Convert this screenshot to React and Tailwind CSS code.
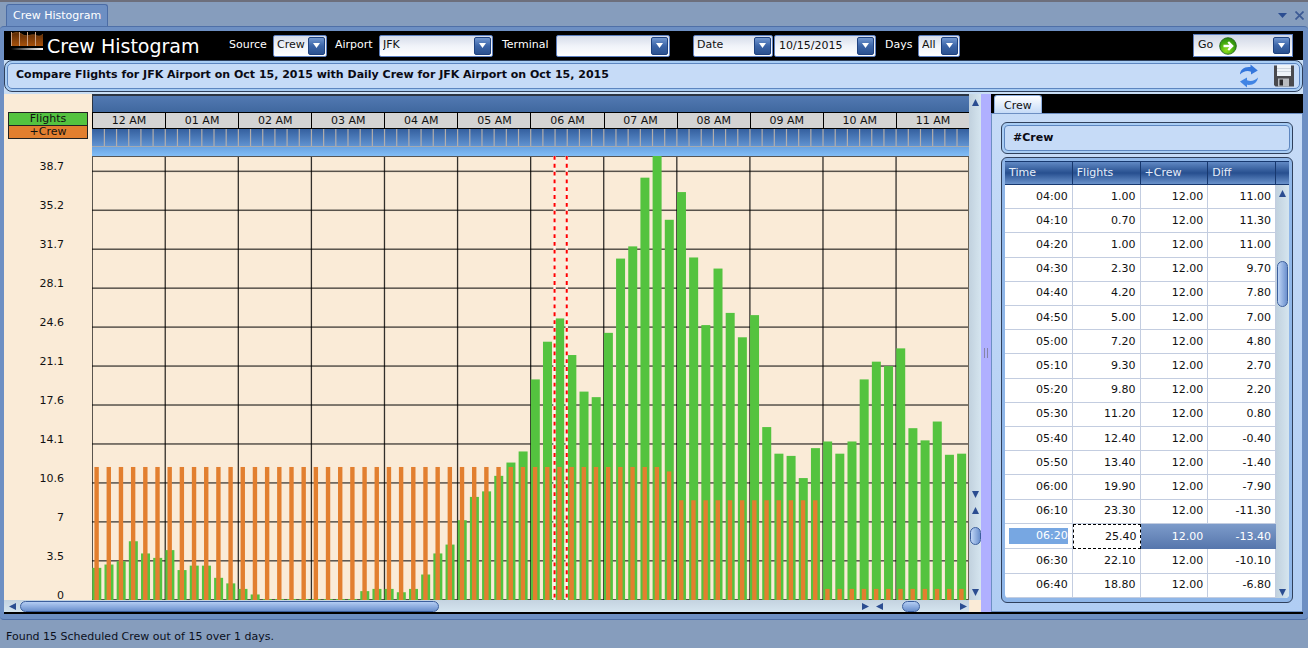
import { useState } from 'react'

const hours = ['12 AM', '01 AM', '02 AM', '03 AM', '04 AM', '05 AM', '06 AM', '07 AM', '08 AM', '09 AM', '10 AM', '11 AM']

const axisLabels = ['38.7', '35.2', '31.7', '28.1', '24.6', '21.1', '17.6', '14.1', '10.6', '7', '3.5', '0']

// one value per 10 minutes, starting at midnight
const flights = [
  2.9, 3.2, 3.5, 5.3, 4.2, 3.8,
  4.5, 2.7, 3.1, 3.1, 2.0, 1.5,
  1.0, 0.5, 0, 0, 0, 0,
  0, 0, 0, 0, 0.8, 1.0,
  1.0, 0.7, 1.0, 2.3, 4.2, 5.0,
  7.2, 9.3, 9.8, 11.2, 12.4, 13.4,
  19.9, 23.3, 25.4, 22.1, 18.8, 18.3,
  24.1, 30.8, 31.9, 38.1, 40.1, 34.3,
  36.8, 30.9, 24.8, 29.9, 25.9, 23.7,
  25.7, 15.6, 13.2, 13.0, 11.0, 13.7,
  14.3, 13.2, 14.3, 19.9, 21.5, 21.1,
  22.7, 15.5, 14.4, 16.1, 13.1, 13.2,
]

const crew = flights.map((_, i) => {
  if (i < 47) return 12
  if (i === 47) return 11.6
  return i < 60 ? 9 : 1
})

const rows = [
  ['04:00', '1.00', '12.00', '11.00'],
  ['04:10', '0.70', '12.00', '11.30'],
  ['04:20', '1.00', '12.00', '11.00'],
  ['04:30', '2.30', '12.00', '9.70'],
  ['04:40', '4.20', '12.00', '7.80'],
  ['04:50', '5.00', '12.00', '7.00'],
  ['05:00', '7.20', '12.00', '4.80'],
  ['05:10', '9.30', '12.00', '2.70'],
  ['05:20', '9.80', '12.00', '2.20'],
  ['05:30', '11.20', '12.00', '0.80'],
  ['05:40', '12.40', '12.00', '-0.40'],
  ['05:50', '13.40', '12.00', '-1.40'],
  ['06:00', '19.90', '12.00', '-7.90'],
  ['06:10', '23.30', '12.00', '-11.30'],
  ['06:20', '25.40', '12.00', '-13.40'],
  ['06:30', '22.10', '12.00', '-10.10'],
  ['06:40', '18.80', '12.00', '-6.80'],
]

const CHART_W = 877
const CHART_H = 443
const STEP = CHART_W / 72
const UNIT = 11.06

function DropButton() {
  return (
    <span className="pointer-events-none absolute top-[2px] right-[2px] bottom-[2px] w-[17px] rounded-[2px] border border-[#1f4280] bg-linear-to-b from-[#7196cf] via-[#3c65a8] to-[#2c5290] flex items-center justify-center">
      <svg width="7" height="5" viewBox="0 0 7 5">
        <path d="M0 0H7L3.5 5Z" fill="#fff" />
      </svg>
    </span>
  )
}

function Combo({ label, width, options }) {
  return (
    <div className={`relative h-[22px] ${width}`}>
      <select
        aria-label={label}
        className="appearance-none w-full h-full pl-[3px] pr-5 rounded-[2px] border border-[#5c7fc0] bg-linear-to-b from-[#d6dcea] via-[#f0f3f9] to-white text-[11px] text-[#111] outline-none"
      >
        {options.map((o) => (
          <option key={o}>{o}</option>
        ))}
      </select>
      <DropButton />
    </div>
  )
}

const arrowPaths = {
  up: 'M0 7L3.5 0L7 7Z',
  down: 'M0 0H7L3.5 7Z',
  left: 'M7 0V7L0 3.5Z',
  right: 'M0 0L7 3.5L0 7Z',
}

function ScrollArrow({ dir, name }) {
  return (
    <button type="button" aria-label={`${name} ${dir}`} className="w-3 h-3 shrink-0 flex items-center justify-center">
      <svg width="7" height="7" viewBox="0 0 7 7">
        <path d={arrowPaths[dir]} fill="#2b4d91" />
      </svg>
    </button>
  )
}

function Logo() {
  return (
    <svg width="32" height="20" viewBox="0 0 32 20" className="shrink-0 mb-[7px]">
      <defs>
        <linearGradient id="logoFill" x1="0" y1="0" x2="0" y2="1">
          <stop offset="0" stopColor="#5a2a06" />
          <stop offset="1" stopColor="#a8520c" />
        </linearGradient>
        <linearGradient id="logoLine" x1="0" y1="0" x2="1" y2="0">
          <stop offset="0" stopColor="#000" />
          <stop offset="0.6" stopColor="#aaa" />
          <stop offset="1" stopColor="#fff" />
        </linearGradient>
      </defs>
      <path d="M0 2C5 0 8 0 12 3C17 5 20 2 24 3C28 5 30 4 32 2V14H0Z" fill="url(#logoFill)" />
      <path d="M0 2C5 0 8 0 12 3C17 5 20 2 24 3C28 5 30 4 32 2" fill="none" stroke="#7d4716" />
      <path d="M0.5 0V14M8.5 0V14M16.5 0V14M24.5 0V14" stroke="#c9a083" strokeWidth="1" />
      <rect x="0" y="16" width="32" height="2" fill="url(#logoLine)" />
    </svg>
  )
}

function GoIcon() {
  return (
    <svg width="18" height="18" viewBox="0 0 18 18">
      <defs>
        <radialGradient id="goFill" cx="0.4" cy="0.75" r="0.8">
          <stop offset="0" stopColor="#8fe01c" />
          <stop offset="0.6" stopColor="#3fa80e" />
          <stop offset="1" stopColor="#2a7f10" />
        </radialGradient>
      </defs>
      <circle cx="9" cy="9" r="8.3" fill="url(#goFill)" stroke="#23661a" strokeWidth="0.9" />
      <path d="M4.5 9H13M9.2 5L13.2 9L9.2 13" fill="none" stroke="#fff" strokeWidth="2.3" />
    </svg>
  )
}

function RefreshIcon() {
  return (
    <svg width="20" height="24" viewBox="0 0 20 24">
      <path d="M1 10.500C1 6 5 2.300 11.500 3V0.500L18.800 6.500L12 10.500V7.700C8 6.300 4 7.500 1 10.500Z" fill="#3577dc" />
      <path d="M19 13.500C18.500 18.500 14 21.500 8 20.800V23.500L1 17.500L8 13.500V16.200C12 17.800 16 16.500 19 13.500Z" fill="#4084e4" />
    </svg>
  )
}

function SaveIcon() {
  return (
    <svg width="22" height="22" viewBox="0 0 22 22">
      <path d="M1 0.500H21V21.500H2.500L1 20Z" fill="#4a4a4e" />
      <rect x="4" y="0" width="14" height="11" fill="#eef3f8" />
      <path d="M4 3.500H18M4 6.500H18" stroke="#cdd5de" />
      <rect x="5" y="13.500" width="11" height="8" fill="#b9bcc0" />
      <rect x="6.500" y="14.500" width="3.500" height="6" fill="#2b2b2e" />
    </svg>
  )
}

function Ticks() {
  return (
    <svg viewBox={`0 0 ${CHART_W} 18`} preserveAspectRatio="none" className="block w-full h-[18px] shrink-0 bg-linear-to-b from-[#35609f] to-[#6396d4]">
      {flights.map((_, i) =>
        i > 0 ? <rect key={i} x={i * STEP - 0.4} y="0" width="1.2" height="17" fill="#b3aeac" /> : null
      )}
      <rect x="0" y="17" width={CHART_W} height="1" fill="#a3aab2" />
    </svg>
  )
}

function Plot() {
  return (
    <svg viewBox={`0 0 ${CHART_W} ${CHART_H}`} preserveAspectRatio="none" role="img" aria-label="Flights and crew" className="block w-full flex-1 min-h-0 bg-[#faebd7]">
      {axisLabels.map((l, i) => (
        <rect key={l} x="0" y={CHART_H - i * 38.86 - 1} width={CHART_W} height="1.5" fill="#000" opacity="0.65" />
      ))}
      {hours.map((h, i) => (
        <rect key={h} x={(i * CHART_W) / 12 - 0.5} y="0" width="1.3" height={CHART_H} fill="#000" opacity="0.8" />
      ))}
      <rect x={CHART_W - 1} y="0" width="1" height={CHART_H} fill="#6b6355" />
      <rect x="0" y="0" width={CHART_W} height="1" fill="#555" />
      {flights.map((v, i) => (
        <rect key={i} x={i * STEP + 0.3} y={CHART_H - Math.max(v * UNIT, 1)} width="9" height={Math.max(v * UNIT, 1)} fill="#54c33f" />
      ))}
      {crew.map((v, i) => (
        <rect key={i} x={i * STEP + 2.4} y={CHART_H - v * UNIT} width="4.4" height={v * UNIT} fill="#e27f2f" />
      ))}
      {[38, 39].map((i) => (
        <g key={i}>
          <path d={`M${i * STEP - 0.3} 0V${CHART_H}`} stroke="#fff5ec" strokeWidth="2.4" />
          <path d={`M${i * STEP - 0.3} 0V${CHART_H}`} stroke="#f00" strokeWidth="2" strokeDasharray="3.8 4" />
        </g>
      ))}
    </svg>
  )
}

const hThumb = 'h-[11px] rounded-full border border-[#3c5f9d] bg-linear-to-b from-[#b4cdf3] to-[#6b90cd]'
const vThumb = 'w-[11px] rounded-full border border-[#3c5f9d] bg-linear-to-r from-[#c0d6f6] to-[#6b90cd]'

function Histogram() {
  return (
    <section className="flex-1 min-w-0 flex bg-[#faebd7]">
      <div className="flex-1 min-w-0 flex flex-col">
        <div className="flex-1 min-h-0 flex">
          {/* Legend and scale */}
          <div className="w-[88px] shrink-0 px-1 pt-[18px] flex flex-col text-[11px] leading-3 text-[#111]">
            <div className="border border-[#222] bg-[#54c33f] text-center">Flights</div>
            <div className="border border-[#222] border-t-0 bg-[#e27f2f] text-center">+Crew</div>
            <div className="flex-1 mt-[22px] -mb-[2px] pr-6 flex flex-col justify-between text-right">
              {axisLabels.map((l) => (
                <span key={l}>{l}</span>
              ))}
            </div>
          </div>

          <div className="flex-1 min-w-0 flex flex-col">
            <div className="h-[18px] shrink-0 border-t-2 border-l border-[#2b3442] bg-linear-to-b from-[#5279b2] to-[#40689f]" />
            <div className="h-[17px] shrink-0 flex border-y border-black bg-[#d3d3d3] text-[11px] leading-4 text-[#111]">
              {hours.map((h) => (
                <div key={h} className="flex-1 border-l border-black text-center">{h}</div>
              ))}
            </div>
            <Ticks />
            <div className="h-[9px] shrink-0 bg-linear-to-b from-[#69a3e2] to-[#82bdf6]" />
            <Plot />
          </div>
        </div>

        {/* Horizontal scrolling */}
        <div className="h-3 shrink-0 flex bg-linear-to-b from-[#c4d3e0] to-[#d5e5ef]">
          <div className="flex-1 flex items-center px-[2px]">
            <ScrollArrow dir="left" name="Scroll time" />
            <div className="flex-1 px-[2px]">
              <div className={`w-1/2 ${hThumb}`} />
            </div>
            <ScrollArrow dir="right" name="Scroll time" />
          </div>
          <div className="w-24 flex items-center justify-between">
            <ScrollArrow dir="left" name="Zoom time" />
            <div className={`w-[18px] -ml-2 mr-3 ${hThumb}`} />
            <ScrollArrow dir="right" name="Zoom time" />
          </div>
        </div>
      </div>

      {/* Vertical scrolling */}
      <div className="w-3 shrink-0 flex flex-col">
        <div className="flex-1 flex flex-col justify-between pt-[2px] bg-linear-to-r from-[#c1d1de] to-[#d5e5ef]">
          <ScrollArrow dir="up" name="Scroll value" />
          <ScrollArrow dir="down" name="Scroll value" />
        </div>
        <div className="h-[100px] flex flex-col items-center pt-1 pb-[2px] bg-linear-to-r from-[#c1d1de] to-[#d5e5ef]">
          <ScrollArrow dir="up" name="Zoom value" />
          <div className={`h-[18px] mt-[11px] mb-auto ${vThumb}`} />
          <ScrollArrow dir="down" name="Zoom value" />
        </div>
        <div className="h-3" />
      </div>
    </section>
  )
}

function CrewTable({ selected, onSelect }) {
  const cell = 'border-r border-b border-[#c3cde0] p-0 pr-1 text-right font-normal'
  return (
    <div className="flex-1 min-h-0 flex rounded-md border border-[#2f405c] bg-[#8fb6e8] p-[3px] pb-1">
      <div className="flex-1 min-w-0 flex overflow-hidden rounded-b-[4px] bg-white">
        <table className="flex-1 h-full table-fixed border-separate border-spacing-0 text-[11px] leading-4 text-[#111]">
          <thead>
            <tr className="h-6">
              {['Time', 'Flights', '+Crew', 'Diff'].map((h) => (
                <th key={h} className="h-6 w-1/4 border border-l-0 border-[#17386f] bg-linear-to-b from-[#6189c4] via-[#274f8f] to-[#6b93cc] p-0 pl-1 text-left font-normal text-[#e6eefa]">
                  {h}
                </th>
              ))}
            </tr>
          </thead>
          <tbody>
            {rows.map((r) => {
              if (r[0] !== selected) {
                return (
                  <tr key={r[0]} onClick={() => onSelect(r[0])}>
                    {r.map((v, i) => (
                      <td key={i} className={cell}>{v}</td>
                    ))}
                  </tr>
                )
              }
              return (
                <tr key={r[0]} aria-selected="true" className="text-white">
                  <td className={`${cell} pl-1`}>
                    <span className="block bg-[#77a7e2]">{r[0]}</span>
                  </td>
                  <td className="border border-dashed border-black p-0 pr-[3px] text-right text-[#111]">{r[1]}</td>
                  <td className="bg-linear-to-b from-[#7d9bca] to-[#5676ac] p-0 pr-[5px] text-right">{r[2]}</td>
                  <td className="bg-linear-to-b from-[#7d9bca] to-[#5676ac] p-0 pr-[5px] text-right">{r[3]}</td>
                </tr>
              )
            })}
          </tbody>
        </table>
        <div className="w-[13px] shrink-0 flex flex-col items-center bg-linear-to-r from-[#c1d1de] to-[#d5e5ef]">
          <div className="h-6 w-full shrink-0 border-y border-[#17386f] bg-linear-to-b from-[#6189c4] via-[#274f8f] to-[#6b93cc]" />
          <div className="flex-1 flex flex-col items-center pt-[2px]">
            <ScrollArrow dir="up" name="Scroll table" />
            <div className="flex-2" />
            <div className={`h-[46px] ${vThumb}`} />
            <div className="flex-9" />
            <ScrollArrow dir="down" name="Scroll table" />
          </div>
        </div>
      </div>
    </div>
  )
}

export default function App() {
  const [selected, setSelected] = useState('06:20')

  return (
    <div className="h-screen min-h-[560px] flex flex-col bg-[#869dbd] border-t-2 border-b border-t-[#6d6f7c] border-b-white font-['DejaVu_Sans',Verdana,sans-serif] text-[11px]">
      {/* Window tab */}
      <header className="h-6 shrink-0 flex items-end justify-between pl-[6px] pr-1">
        <div role="tab" aria-selected="true" className="h-[22px] px-[6px] leading-[22px] rounded-t-[3px] border border-b-0 border-[#4b6ca5] bg-[#6d8fc3] text-white">
          Crew Histogram
        </div>
        <div className="h-[22px] flex items-center gap-2">
          <button type="button" aria-label="Window menu">
            <svg width="9" height="5" viewBox="0 0 9 5">
              <path d="M0 0H9L4.500 5Z" fill="#2b4d91" />
            </svg>
          </button>
          <button type="button" aria-label="Close">
            <svg width="9" height="9" viewBox="0 0 9 9">
              <path d="M0.500 0.500L8.500 8.500M8.500 0.500L0.500 8.500" stroke="#3c5a94" strokeWidth="1.700" />
            </svg>
          </button>
        </div>
      </header>

      <main className="flex-1 min-h-0 flex flex-col rounded-[4px] border-y border-[#4f70a8] bg-[#6d8fc3] pl-1 pr-[5px] pt-1 pb-[5px]">
        {/* Toolbar */}
        <div className="h-[29px] shrink-0 flex items-center bg-black pl-[7px] pr-[10px] text-white">
          <Logo />
          <h1 className="ml-1 w-[182px] shrink-0 whitespace-nowrap text-[19px] leading-6">Crew Histogram</h1>
          <span className="w-11">Source</span>
          <Combo label="Source" width="w-[54px]" options={['Crew', 'Gate']} />
          <span className="ml-2 w-11">Airport</span>
          <Combo label="Airport" width="w-[114px]" options={['JFK', 'LGA']} />
          <span className="ml-[9px] w-[54px]">Terminal</span>
          <Combo label="Terminal" width="w-[114px]" options={['']} />
          <div className="ml-[23px]">
            <Combo label="Date mode" width="w-[80px]" options={['Date']} />
          </div>
          <div className="relative ml-px h-[22px] w-[102px]">
            <input
              aria-label="Date"
              defaultValue="10/15/2015"
              className="w-full h-full pl-1 pr-5 rounded-[2px] border border-[#5c7fc0] bg-linear-to-b from-[#d6dcea] via-[#f0f3f9] to-white text-[11px] text-[#111] outline-none"
            />
            <DropButton />
          </div>
          <span className="ml-[9px] w-[33px]">Days</span>
          <Combo label="Days" width="w-[42px]" options={['All', '1']} />
          <button type="button" className="relative ml-auto h-[23px] w-[100px] flex items-center gap-[6px] pl-1 border border-[#5c7fc0] bg-linear-to-b from-[#d0d7e6] to-white text-[#111]">
            Go
            <GoIcon />
            <DropButton />
          </button>
        </div>

        {/* Comparison heading */}
        <div className="shrink-0 bg-[#c9def5] pb-[2px]">
          <div className="rounded-lg border border-[#2f405c] bg-[#a9cdf4] p-[2px]">
            <div className="h-[26px] flex items-center rounded-[5px] border border-[#5d86c0] bg-[#c6dbf7] pl-2 pr-1 text-[#0a0a14]">
              <h2 className="flex-1 pb-[2px] font-bold">
                Compare Flights for JFK Airport on Oct 15, 2015 with Daily Crew for JFK Airport on Oct 15, 2015
              </h2>
              <button type="button" aria-label="Refresh">
                <RefreshIcon />
              </button>
              <button type="button" aria-label="Save" className="ml-[14px]">
                <SaveIcon />
              </button>
            </div>
          </div>
        </div>

        <div className="flex-1 min-h-0 flex border-b-2 border-black">
          <Histogram />

          <div className="w-[10px] shrink-0 flex items-center justify-center gap-[2px] bg-[#b0b0ff]">
            <span className="w-px h-[10px] bg-[#8585a8]" />
            <span className="w-px h-[10px] bg-[#8585a8]" />
          </div>

          {/* Crew panel */}
          <aside className="w-[312px] shrink-0 flex flex-col bg-black">
            <div className="h-[19px] shrink-0 pl-[3px] pt-px flex">
              <button type="button" className="px-[9px] pt-[2px] rounded-t-[3px] border border-b-0 border-[#8fb0e0] bg-linear-to-b from-white to-[#c6dbf7] text-[#111]">
                Crew
              </button>
            </div>
            <div className="flex-1 min-h-0 flex flex-col gap-[3px] border border-[#6d8fc3] bg-linear-to-b from-[#c6dbf7] to-[#b0cdf3] px-[9px] py-2">
              <div className="shrink-0 rounded-md border border-[#2f405c] bg-[#a9cdf4] p-[2px]">
                <h3 className="h-[26px] rounded-[4px] border border-[#5d86c0] bg-[#c6dbf7] pl-2 leading-6 font-bold text-[#0a0a14]">#Crew</h3>
              </div>
              <CrewTable selected={selected} onSelect={setSelected} />
            </div>
          </aside>
        </div>
      </main>

      <footer className="h-7 shrink-0 pl-[6px] pt-[9px] leading-4 text-[#0a0f1c]">
        Found 15 Scheduled Crew out of 15 over 1 days.
      </footer>
    </div>
  )
}
